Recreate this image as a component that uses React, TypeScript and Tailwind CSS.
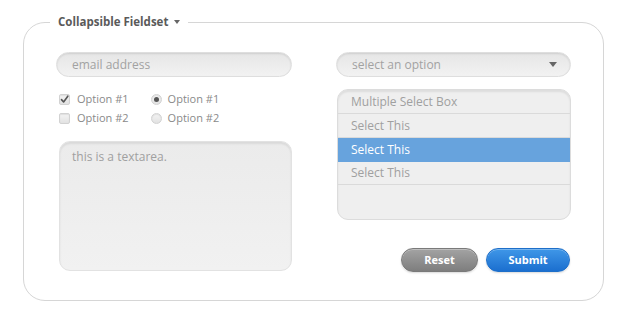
import React from "react";

const font = { fontFamily: '"Open Sans", "Liberation Sans", sans-serif' };

function Check({ checked }: { checked?: boolean }) {
  return (
    <span className="flex h-[11px] w-[11px] items-center justify-center rounded-[2px] border border-[#d2d2d2] bg-gradient-to-b from-[#f4f4f4] to-[#e2e2e2] shadow-[inset_0_1px_1px_rgba(0,0,0,0.08)]">
      {checked && (
        <svg width="9" height="9" viewBox="0 0 9 9">
          <path d="M1.5 4.6 L3.6 7 L7.8 1.2" fill="none" stroke="#555" strokeWidth="1.6" strokeLinecap="round" strokeLinejoin="round" />
        </svg>
      )}
    </span>
  );
}

function Radio({ checked }: { checked?: boolean }) {
  return (
    <span className="flex h-[11px] w-[11px] items-center justify-center rounded-full border border-[#d2d2d2] bg-gradient-to-b from-[#f4f4f4] to-[#e2e2e2] shadow-[inset_0_1px_1px_rgba(0,0,0,0.08)]">
      {checked && <span className="h-[5px] w-[5px] rounded-full bg-[#555]" />}
    </span>
  );
}

export default function App() {
  return (
    <div className="h-[323px] w-[626px] bg-white" style={font}>
      <div className="pt-[15px] pl-[23px]">
        <fieldset className="h-[286px] w-[581px] rounded-[22px] border border-[#d6d6d6] p-0">
          <legend className="ml-[26px] flex items-center gap-[6px] px-[8px] text-[11.5px] font-bold leading-[14px] text-[#5a5a5a]">
            Collapsible Fieldset
            <svg width="6" height="4" viewBox="0 0 6 4">
              <path d="M0 0 L6 0 L3 4 Z" fill="#666" />
            </svg>
          </legend>
          <div className="grid grid-cols-[236px_235px] gap-x-[44px] pl-[32px] pr-[31px] pt-[23px]">
            <div className="flex flex-col">
              <input
                readOnly
                placeholder="email address"
                className="h-[25px] w-[236px] rounded-full border border-[#dedede] bg-gradient-to-b from-[#e6e6e6] to-[#f2f2f2] px-[15px] text-[12px] text-[#999] shadow-[inset_0_1px_2px_rgba(0,0,0,0.1),0_1px_0_rgba(255,255,255,0.9)] outline-none placeholder:text-[#a2a2a2]"
              />
              <div className="mt-[17px] ml-[3px] flex gap-[22px] text-[11px] text-[#8a8a8a]">
                <div className="flex flex-col gap-[8px]">
                  <label className="flex h-[11px] items-center gap-[7px]"><Check checked />Option #1</label>
                  <label className="flex h-[11px] items-center gap-[7px]"><Check />Option #2</label>
                </div>
                <div className="flex flex-col gap-[8px]">
                  <label className="flex h-[11px] items-center gap-[6px]"><Radio checked />Option #1</label>
                  <label className="flex h-[11px] items-center gap-[6px]"><Radio />Option #2</label>
                </div>
              </div>
              <textarea
                readOnly
                defaultValue="this is a textarea."
                className="mt-[17px] ml-[3px] h-[130px] w-[233px] resize-none rounded-[11px] border border-[#e2e2e2] bg-gradient-to-b from-[#ebebeb] to-[#f1f1f1] px-[12px] py-[6px] text-[12px] leading-[18px] text-[#a0a0a0] shadow-[inset_0_2px_2px_rgba(0,0,0,0.08)] outline-none"
              />
            </div>
            <div className="flex flex-col">
              <div className="flex h-[25px] w-[235px] items-center justify-between rounded-full border border-[#dedede] bg-gradient-to-b from-[#e6e6e6] to-[#f2f2f2] pl-[15px] pr-[13px] text-[12px] text-[#a2a2a2] shadow-[inset_0_1px_2px_rgba(0,0,0,0.1),0_1px_0_rgba(255,255,255,0.9)]">
                <span>select an option</span>
                <svg width="8" height="5" viewBox="0 0 8 5">
                  <path d="M0 0 L8 0 L4 5 Z" fill="#666" />
                </svg>
              </div>
              <div className="mt-[12px] ml-[1px] h-[131px] w-[234px] overflow-hidden rounded-[11px] border border-[#dcdcdc] bg-[#efefef] text-[12px] text-[#a0a0a0] shadow-[inset_0_2px_2px_rgba(0,0,0,0.08)]">
                <div className="flex h-[24px] items-center border-b border-[#dadada] px-[13px]">Multiple Select Box</div>
                <div className="flex h-[24px] items-center border-b border-[#dadada] px-[13px]">Select This</div>
                <div className="flex h-[24px] items-center bg-[#67a3dd] px-[13px] text-white">Select This</div>
                <div className="flex h-[23px] items-center border-b border-[#dadada] px-[13px]">Select This</div>
              </div>
              <div className="mt-[28px] flex justify-end gap-[8px] pr-[1px]">
                <button className="h-[24px] w-[77px] rounded-full border border-[#7a7a7a] bg-gradient-to-b from-[#a3a3a3] to-[#7e7e7e] text-[11px] font-bold text-white shadow-[0_1px_2px_rgba(0,0,0,0.15),inset_0_1px_0_rgba(255,255,255,0.3)]">
                  Reset
                </button>
                <button className="h-[24px] w-[84px] rounded-full border border-[#1e6fc9] bg-gradient-to-b from-[#3f97e8] to-[#1b6fcf] text-[11px] font-bold text-white shadow-[0_1px_2px_rgba(0,0,0,0.15),inset_0_1px_0_rgba(255,255,255,0.3)]">
                  Submit
                </button>
              </div>
            </div>
          </div>
        </fieldset>
      </div>
    </div>
  );
}
